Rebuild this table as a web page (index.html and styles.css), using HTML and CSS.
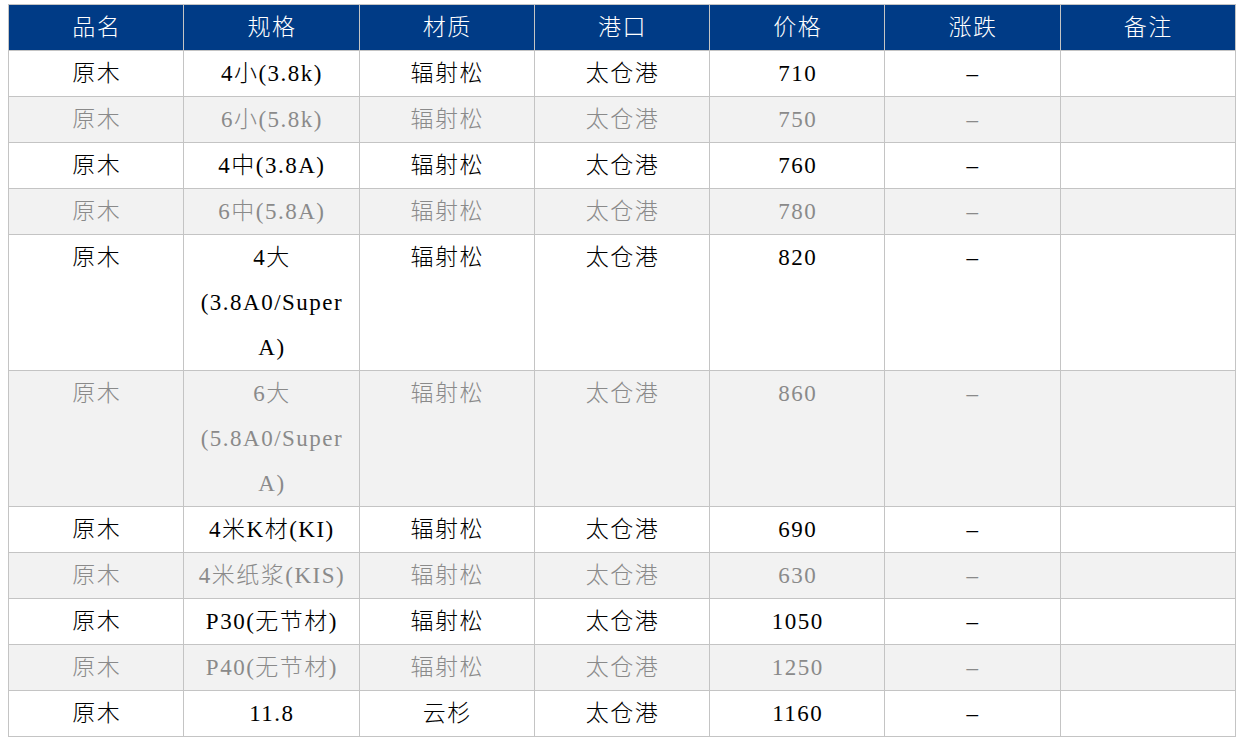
FILE: index.html
```html
<!DOCTYPE html>
<html lang="zh-CN">
<head>
<meta charset="utf-8">
<title>原木价格</title>
<link rel="stylesheet" href="styles.css">
</head>
<body>
<table class="price-table">
  <thead>
    <tr><th>品名</th><th>规格</th><th>材质</th><th>港口</th><th>价格</th><th>涨跌</th><th>备注</th></tr>
  </thead>
  <tbody>
    <tr><td>原木</td><td>4小(3.8k)</td><td>辐射松</td><td>太仓港</td><td>710</td><td>–</td><td></td></tr>
    <tr class="alt"><td>原木</td><td>6小(5.8k)</td><td>辐射松</td><td>太仓港</td><td>750</td><td>–</td><td></td></tr>
    <tr><td>原木</td><td>4中(3.8A)</td><td>辐射松</td><td>太仓港</td><td>760</td><td>–</td><td></td></tr>
    <tr class="alt"><td>原木</td><td>6中(5.8A)</td><td>辐射松</td><td>太仓港</td><td>780</td><td>–</td><td></td></tr>
    <tr><td>原木</td><td>4大<br>(3.8A0/Super<br>A)</td><td>辐射松</td><td>太仓港</td><td>820</td><td>–</td><td></td></tr>
    <tr class="alt"><td>原木</td><td>6大<br>(5.8A0/Super<br>A)</td><td>辐射松</td><td>太仓港</td><td>860</td><td>–</td><td></td></tr>
    <tr><td>原木</td><td>4米K材(KI)</td><td>辐射松</td><td>太仓港</td><td>690</td><td>–</td><td></td></tr>
    <tr class="alt"><td>原木</td><td>4米纸浆(KIS)</td><td>辐射松</td><td>太仓港</td><td>630</td><td>–</td><td></td></tr>
    <tr><td>原木</td><td>P30(无节材)</td><td>辐射松</td><td>太仓港</td><td>1050</td><td>–</td><td></td></tr>
    <tr class="alt"><td>原木</td><td>P40(无节材)</td><td>辐射松</td><td>太仓港</td><td>1250</td><td>–</td><td></td></tr>
    <tr><td>原木</td><td>11.8</td><td>云杉</td><td>太仓港</td><td>1160</td><td>–</td><td></td></tr>
  </tbody>
</table>
</body>
</html>
```

FILE: styles.css
```css
html, body {
  margin: 0;
  padding: 0;
  background: #ffffff;
}
body {
  padding: 4px 0 0 8px;
}
.price-table {
  width: 1228px;
  border-collapse: collapse;
  table-layout: fixed;
  font-family: "Liberation Serif", "Noto Sans CJK SC Light", "Noto Sans CJK SC", serif;
  font-size: 23px;
  font-weight: 400;
  letter-spacing: 1.5px;
  color: #000000;
}
.price-table th,
.price-table td {
  border: 1px solid #c4c4c4;
  height: 45px;
  line-height: 45px;
  padding: 0 0 0 1px;
  text-align: center;
  vertical-align: top;
  white-space: nowrap;
  font-weight: 400;
  box-sizing: border-box;
}
.price-table th {
  background: #003b86;
  color: #ffffff;
}
.price-table tr.alt td {
  background: #f2f2f2;
  color: #8a8a8a;
}
```
